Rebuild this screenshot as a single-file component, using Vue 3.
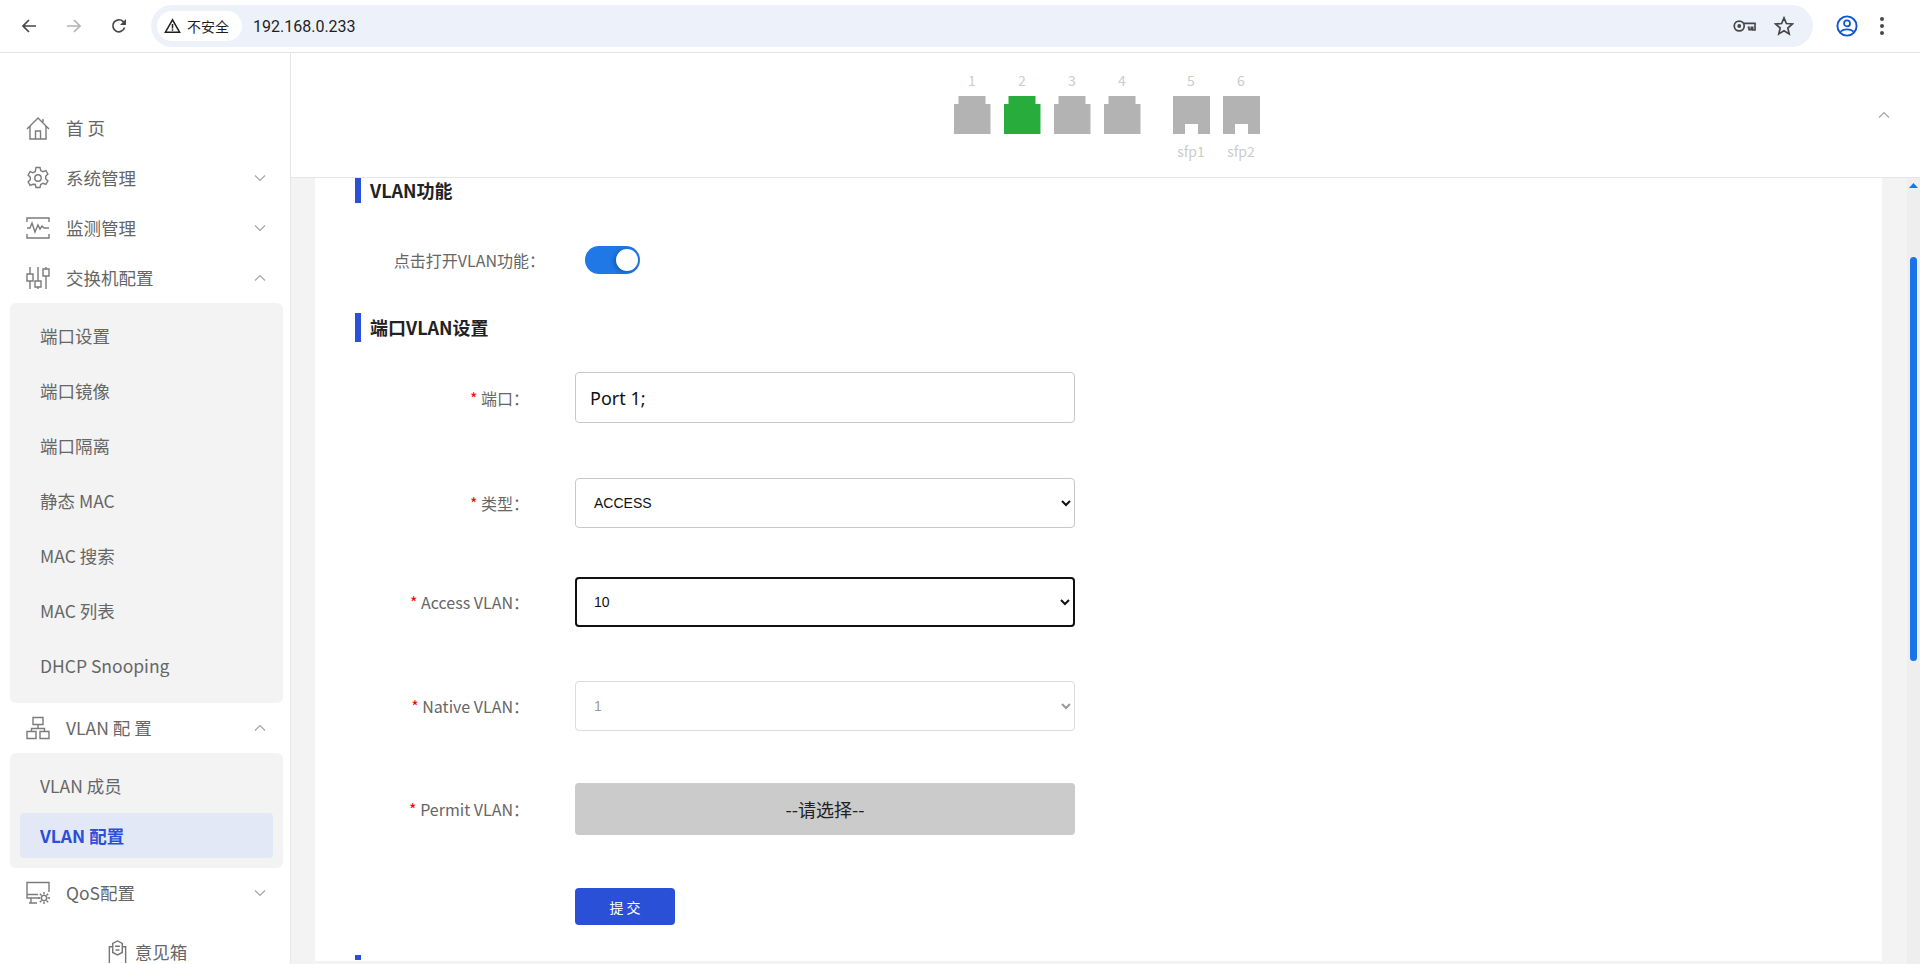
<template>
  <div class="page">
    <!-- browser toolbar -->
    <div class="chrome">
      <svg class="nav-ic back" viewBox="0 0 16 16"><path d="M15 8H2.5M8 2 2 8l6 6" fill="none" stroke="#474747" stroke-width="1.7"/></svg>
      <svg class="nav-ic fwd" viewBox="0 0 16 16"><path d="M1 8h12.5M8 2l6 6-6 6" fill="none" stroke="#b4b4b4" stroke-width="1.7"/></svg>
      <svg class="nav-ic reload" viewBox="0 0 16 16"><path d="M13.6 9.6A6 6 0 1 1 12 3.4L14 5.4" fill="none" stroke="#474747" stroke-width="1.7"/><path d="M15 1v6H9z" fill="#474747"/></svg>
      <div class="omnibox">
        <div class="secure">
          <svg class="warn" viewBox="0 0 18 16"><path d="M9 1.5 1.5 14.5h15z" fill="none" stroke="#1f1f1f" stroke-width="1.6"/><path d="M8.2 6h1.6v4.6H8.2zM8.2 11.4h1.6V13H8.2z" fill="#1f1f1f"/></svg>
          <span>不安全</span>
        </div>
        <span class="url">192.168.0.233</span>
        <svg class="key" viewBox="0 0 24 14"><circle cx="6.5" cy="7" r="5.2" fill="none" stroke="#474747" stroke-width="1.8"/><circle cx="6.5" cy="7" r="2" fill="#474747"/><path d="M11.5 4.2H23v7h-2.4V8.4h-1.5v2.4h-2.4V8.4h-1.4" fill="none" stroke="#474747" stroke-width="1.7"/></svg>
        <svg class="star" viewBox="0 0 20 20"><path d="m10 1.9 2.4 5.6 6 .5-4.6 4 1.4 5.9L10 14.8l-5.2 3.1 1.4-5.9-4.6-4 6-.5z" fill="none" stroke="#474747" stroke-width="1.7"/></svg>
      </div>
      <svg class="profile" viewBox="0 0 22 22"><circle cx="11" cy="11" r="9.6" fill="none" stroke="#0b57d0" stroke-width="1.9"/><circle cx="11" cy="8.4" r="3" fill="none" stroke="#0b57d0" stroke-width="1.7"/><path d="M4.4 16.6c3.6-2.9 9.6-2.9 13.2 0" fill="none" stroke="#0b57d0" stroke-width="1.7"/></svg>
      <div class="dots"><i></i><i></i><i></i></div>
    </div>

    <div class="body">
      <!-- left menu -->
      <aside class="sidebar">
        <template v-for="m in menus" :key="m.name">
          <div class="menu-item">
            <svg class="menu-ic" viewBox="0 0 24 24" v-html="m.icon"></svg>
            <span class="menu-name">{{ m.name }}</span>
            <svg v-if="m.arrow" class="chev" viewBox="0 0 12 8"><path :d="m.arrow === 'up' ? 'M1 6.5 6 1.5l5 5' : 'M1 1.5l5 5 5-5'" fill="none" stroke="#a6a6a6" stroke-width="1.2"/></svg>
          </div>
          <div v-if="m.children" class="submenu">
            <div v-for="c in m.children" :key="c" class="sub-item" :class="{ active: c === 'VLAN 配置' }">{{ c }}</div>
          </div>
        </template>
        <div class="feedback">
          <svg class="fb-ic" viewBox="0 0 24 24"><path d="M7 7V3.5L12 1l5 2.5V7h3.5v17M3.500 24V7H7M7 7v6l5 2.500 5-2.500V7M9.500 6.500h5M10 10.500h4" fill="none" stroke="#777" stroke-width="1.5"/></svg>
          <span>意见箱</span>
        </div>
      </aside>

      <main class="main">
        <!-- port panel -->
        <header class="ports">
          <div class="port-group">
            <div v-for="p in rjPorts" :key="p.no" class="port">
              <span class="port-no">{{ p.no }}</span>
              <div class="rj" :class="{ up: p.up }"><b></b></div>
            </div>
          </div>
          <div class="port-group sfp-group">
            <div v-for="p in sfpPorts" :key="p.no" class="port">
              <span class="port-no">{{ p.no }}</span>
              <div class="sfp"><b></b></div>
              <span class="port-name">{{ p.name }}</span>
            </div>
          </div>
          <svg class="collapse" viewBox="0 0 12 8"><path d="M1 6.500 6 1.500l5 5" fill="none" stroke="#a6a6a6" stroke-width="1.2"/></svg>
        </header>

        <div class="content">
          <div class="card">
            <h3 class="sec first">VLAN功能</h3>
            <div class="toggle-row">
              <label class="toggle-label">点击打开VLAN功能：</label>
              <div class="toggle"><span></span></div>
            </div>
            <h3 class="sec second">端口VLAN设置</h3>

            <form class="form" @submit.prevent>
              <div class="row r-port">
                <label><em>*</em> 端口：</label>
                <input class="text-input" type="text" v-model="portText" />
              </div>
              <div class="row r-type">
                <label><em>*</em> 类型：</label>
                <select v-model="type"><option>ACCESS</option><option>TRUNK</option></select>
              </div>
              <div class="row r-access">
                <label><em>*</em> Access VLAN：</label>
                <select v-model="access" class="focused"><option>1</option><option>10</option></select>
              </div>
              <div class="row r-native">
                <label><em>*</em> Native VLAN：</label>
                <select disabled><option>1</option></select>
              </div>
              <div class="row r-permit">
                <label><em>*</em> Permit VLAN：</label>
                <button type="button" class="picker">--请选择--</button>
              </div>
              <div class="row r-submit">
                <label></label>
                <button type="submit" class="submit">提 交</button>
              </div>
            </form>
            <div class="sec-stub"></div>
          </div>
          <div class="scrollbar">
            <svg class="sb-up" viewBox="0 0 9 5"><path d="M4.500 0 9 5H0z" fill="#1a73e8"/></svg>
            <div class="thumb"></div>
          </div>
        </div>
      </main>
    </div>
  </div>
</template>

<script setup>
import { ref } from 'vue'

const portText = ref('Port 1;')
const type = ref('ACCESS')
const access = ref('10')

const stroke = 'fill="none" stroke="#7b7b7b" stroke-width="1.4"'

const menus = [
  {
    name: '首 页',
    icon: `<path d="M1 13 12 2l11 11M4 10.500V23h16V10.500M9.500 23v-8h5v8M17 3v3" ${stroke}/>`
  },
  {
    name: '系统管理',
    arrow: 'down',
    icon: `<path d="M10 1.500h4l.7 3 2.300 1.200 2.900-1 2 3.400-2.200 2.100v2.600l2.200 2.100-2 3.400-2.900-1-2.300 1.200-.7 3h-4l-.7-3L7 18.300l-2.900 1-2-3.400 2.200-2.100v-2.600L2.100 9.100l2-3.400 2.900 1 2.300-1.200z" ${stroke}/><circle cx="12" cy="12" r="3.200" ${stroke}/>`
  },
  {
    name: '监测管理',
    arrow: 'down',
    icon: `<path d="M1 6V2h22v4M1 18v4h22v-4" ${stroke}/><path d="M1 12h3l2-5 3 9 3-7 2 4 2-3 2 2h5" ${stroke}/>`
  },
  {
    name: '交换机配置',
    arrow: 'up',
    icon: `<path d="M4 1v7M4 15v8M12 1v14M12 21v2M20 1v2M20 10v13" ${stroke}/><path d="M1 8h6v7H1zM9 15h6v6H9zM17 3h6v7h-6z" ${stroke}/>`,
    children: ['端口设置', '端口镜像', '端口隔离', '静态 MAC', 'MAC 搜索', 'MAC 列表', 'DHCP Snooping']
  },
  {
    name: 'VLAN 配 置',
    arrow: 'up',
    icon: `<path d="M7 1.500h10v7H7zM1 15.500h9v7H1zM14 15.500h9v7h-9zM12 8.500v4M5.500 15.500v-3h13v3" ${stroke}/>`,
    children: ['VLAN 成员', 'VLAN 配置']
  },
  {
    name: 'QoS配置',
    arrow: 'down',
    icon: `<path d="M14 17H1V1.500h22V11M1 13.500h11M5 17v5h6M3 22h8" ${stroke}/><circle cx="18" cy="17" r="2.600" ${stroke}/><path d="M18 11v2.500M18 20.500V23M12 17h2.500M21.500 17H24M13.800 12.800l1.800 1.800M20.400 19.400l1.800 1.800M13.800 21.200l1.800-1.800M20.400 14.600l1.800-1.800" ${stroke}/>`
  }
]

const rjPorts = [
  { no: 1 },
  { no: 2, up: true },
  { no: 3 },
  { no: 4 }
]

const sfpPorts = [
  { no: 5, name: 'sfp1' },
  { no: 6, name: 'sfp2' }
]
</script>

<style>
html, body {
  margin: 0;
  overflow: hidden;
  background: #fff;
}
</style>

<style scoped>
.page {
  width: 1920px;
  height: 964px;
  display: flex;
  flex-direction: column;
  overflow: hidden;
  font-family: "Noto Sans CJK SC", "Noto Sans", sans-serif;
}

/* browser toolbar */
.chrome {
  height: 52px;
  flex: none;
  display: flex;
  align-items: center;
  border-bottom: 1px solid #e2e2e2;
  background: #fff;
  font-family: Roboto, "Noto Sans CJK SC", sans-serif;
}
.nav-ic {
  width: 16px;
  height: 16px;
  margin-left: 21px;
  margin-right: 8px;
  flex: none;
}
.back { margin-left: 21px; }
.fwd { margin-left: 21px; }
.reload { margin-left: 21px; margin-right: 0; }
.omnibox {
  margin-left: 24px;
  width: 1662px;
  height: 42px;
  border-radius: 21px;
  background: #edf2fa;
  display: flex;
  align-items: center;
  padding-left: 6px;
  box-sizing: border-box;
}
.secure {
  width: 85px;
  height: 30px;
  border-radius: 15px;
  background: #fff;
  display: flex;
  align-items: center;
  padding-left: 7px;
  box-sizing: border-box;
  font-size: 14px;
  color: #1f1f1f;
}
.warn { width: 17px; height: 16px; margin-right: 6px; }
.url {
  margin-left: 11px;
  font-size: 16px;
  color: #1f1f1f;
}
.key { width: 23px; height: 14px; margin-left: auto; }
.star { width: 20px; height: 20px; margin-left: 18px; margin-right: 19px; }
.profile { width: 22px; height: 22px; margin-left: 23px; flex: none; }
.dots {
  margin-left: 22px;
  display: flex;
  flex-direction: column;
  gap: 3px;
}
.dots i {
  width: 4px;
  height: 4px;
  border-radius: 50%;
  background: #474747;
}

.body {
  flex: 1;
  display: flex;
  min-height: 0;
}

/* left menu */
.sidebar {
  width: 290px;
  flex: none;
  border-right: 1px solid #e6e6e6;
  padding: 50px 7px 0 10px;
  box-sizing: content-box;
  overflow: hidden;
  color: #666;
  font-size: 17.5px;
  background: #fff;
  width: 273px;
}
.menu-item {
  height: 50px;
  display: flex;
  align-items: center;
  padding-left: 16px;
}
.menu-ic { width: 24px; height: 24px; flex: none; }
.menu-name { margin-left: 16px; line-height: 24px; }
.chev {
  width: 12px;
  height: 8px;
  margin-left: auto;
  margin-right: 17px;
}
.submenu {
  background: #f3f3f3;
  border-radius: 6px;
  padding: 5px 10px 10px;
}
.sub-item {
  height: 55px;
  line-height: 55px;
  padding-left: 20px;
  margin-bottom: 0;
}
.sub-item.active {
  height: 45px;
  line-height: 45px;
  margin-top: 0;
  background: #e3e8f7;
  border-radius: 4px;
  color: #2b50d8;
  font-weight: 700;
}
.feedback {
  margin-top: 21px;
  display: flex;
  align-items: center;
  justify-content: center;
  gap: 6px;
  padding-right: 0;
  color: #666;
}
.fb-ic { width: 23px; height: 23px; }

/* ports */
.main {
  flex: 1;
  min-width: 0;
  display: flex;
  flex-direction: column;
}
.ports {
  height: 124px;
  flex: none;
  border-bottom: 1px solid #e6e6e6;
  background: #fff;
  display: flex;
  justify-content: center;
  padding-top: 18px;
  box-sizing: content-box;
  position: relative;
  height: 106px;
  padding-left: 2px;
}
.port-group { display: flex; gap: 13px; }
.sfp-group { margin-left: 32px; }
.port {
  width: 37px;
  display: flex;
  flex-direction: column;
  align-items: center;
  font-size: 14px;
  line-height: 18px;
  color: #ccc;
}
.port-no { height: 18px; margin-bottom: 7px; }
.port-name { margin-top: 8px; }
.rj, .sfp {
  width: 37px;
  height: 38px;
  position: relative;
  background: #b3b3b3;
}
.rj {
  clip-path: polygon(5px 0, 32px 0, 32px 8px, 37px 8px, 37px 38px, 0 38px, 0 8px, 5px 8px);
}
.rj.up { background: #28ad3c; }
.sfp b {
  position: absolute;
  left: 12px;
  bottom: 0;
  width: 13px;
  height: 10px;
  background: #fff;
}
.collapse {
  position: absolute;
  right: 30px;
  top: 58px;
  width: 12px;
  height: 8px;
}

/* content */
.content {
  flex: 1;
  min-height: 0;
  display: flex;
  background: #f3f3f3;
  padding-left: 24px;
}
.card {
  width: 1567px;
  height: 783px;
  background: #fff;
  padding-left: 40px;
  box-sizing: border-box;
  overflow: hidden;
}
.sec {
  margin: 0;
  border-left: 6px solid #2b50d8;
  padding-left: 9px;
  font-size: 18px;
  font-weight: 700;
  color: #222;
}
.first { height: 25px; line-height: 25px; }
.second { height: 29px; line-height: 29px; margin-top: 39px; }
.toggle-row {
  display: flex;
  align-items: center;
  margin-top: 43px;
  height: 28px;
}
.toggle-label {
  width: 190px;
  text-align: right;
  font-size: 16px;
  color: #666;
}
.toggle {
  width: 55px;
  height: 28px;
  margin-left: 40px;
  border-radius: 14px;
  background: #1f78e6;
  position: relative;
}
.toggle span {
  position: absolute;
  right: 2px;
  top: 3px;
  width: 22px;
  height: 22px;
  border-radius: 50%;
  background: #fff;
  box-shadow: -2px 1px 4px rgba(0, 0, 0, 0.25);
}
.form { margin-top: 30px; }
.row { display: flex; align-items: center; }
.row label {
  width: 174px;
  text-align: right;
  font-size: 16px;
  color: #666;
  margin-right: 46px;
}
.row label em {
  color: #f00;
  font-style: normal;
}
.r-type { margin-top: 55px; }
.r-access { margin-top: 49px; }
.r-native { margin-top: 54px; }
.r-permit { margin-top: 52px; }
.r-submit { margin-top: 53px; }
.text-input {
  width: 500px;
  height: 51px;
  box-sizing: border-box;
  border: 1px solid #c8c8c8;
  border-radius: 4px;
  padding: 0 14px;
  font: 18px "Noto Sans", sans-serif;
  color: #111;
  background: #fff;
  outline: none;
}
select {
  width: 500px;
  height: 50px;
  box-sizing: border-box;
  border: 1px solid #c8c8c8;
  border-radius: 4px;
  padding: 0 14px;
  font: 14px "Liberation Sans", sans-serif;
  color: #111;
  background: #fff;
  outline: none;
}
select.focused { border: 2px solid #111; padding: 0 13px; }
select:disabled { border-color: #dcdcdc; color: #9a9a9a; opacity: 1; }
.picker {
  width: 500px;
  height: 52px;
  border: none;
  border-radius: 4px;
  background: #cbcbcb;
  font: 18px "Noto Sans CJK SC", sans-serif;
  color: #222;
}
.submit {
  width: 100px;
  height: 37px;
  border: none;
  border-radius: 4px;
  background: #2b50d8;
  color: #fff;
  font: 14px "Noto Sans CJK SC", sans-serif;
}
.sec-stub {
  width: 6px;
  height: 5px;
  margin-top: 30px;
  background: #2b50d8;
}
.scrollbar {
  margin-left: 25px;
  width: 13px;
  background: #eeeeee;
  position: relative;
  display: flex;
  flex-direction: column;
  align-items: center;
}
.sb-up { width: 9px; height: 5px; margin-top: 5px; flex: none; }
.thumb {
  width: 7px;
  margin-top: 69px;
  height: 404px;
  border-radius: 4px;
  background: #1a73e8;
}
</style>
